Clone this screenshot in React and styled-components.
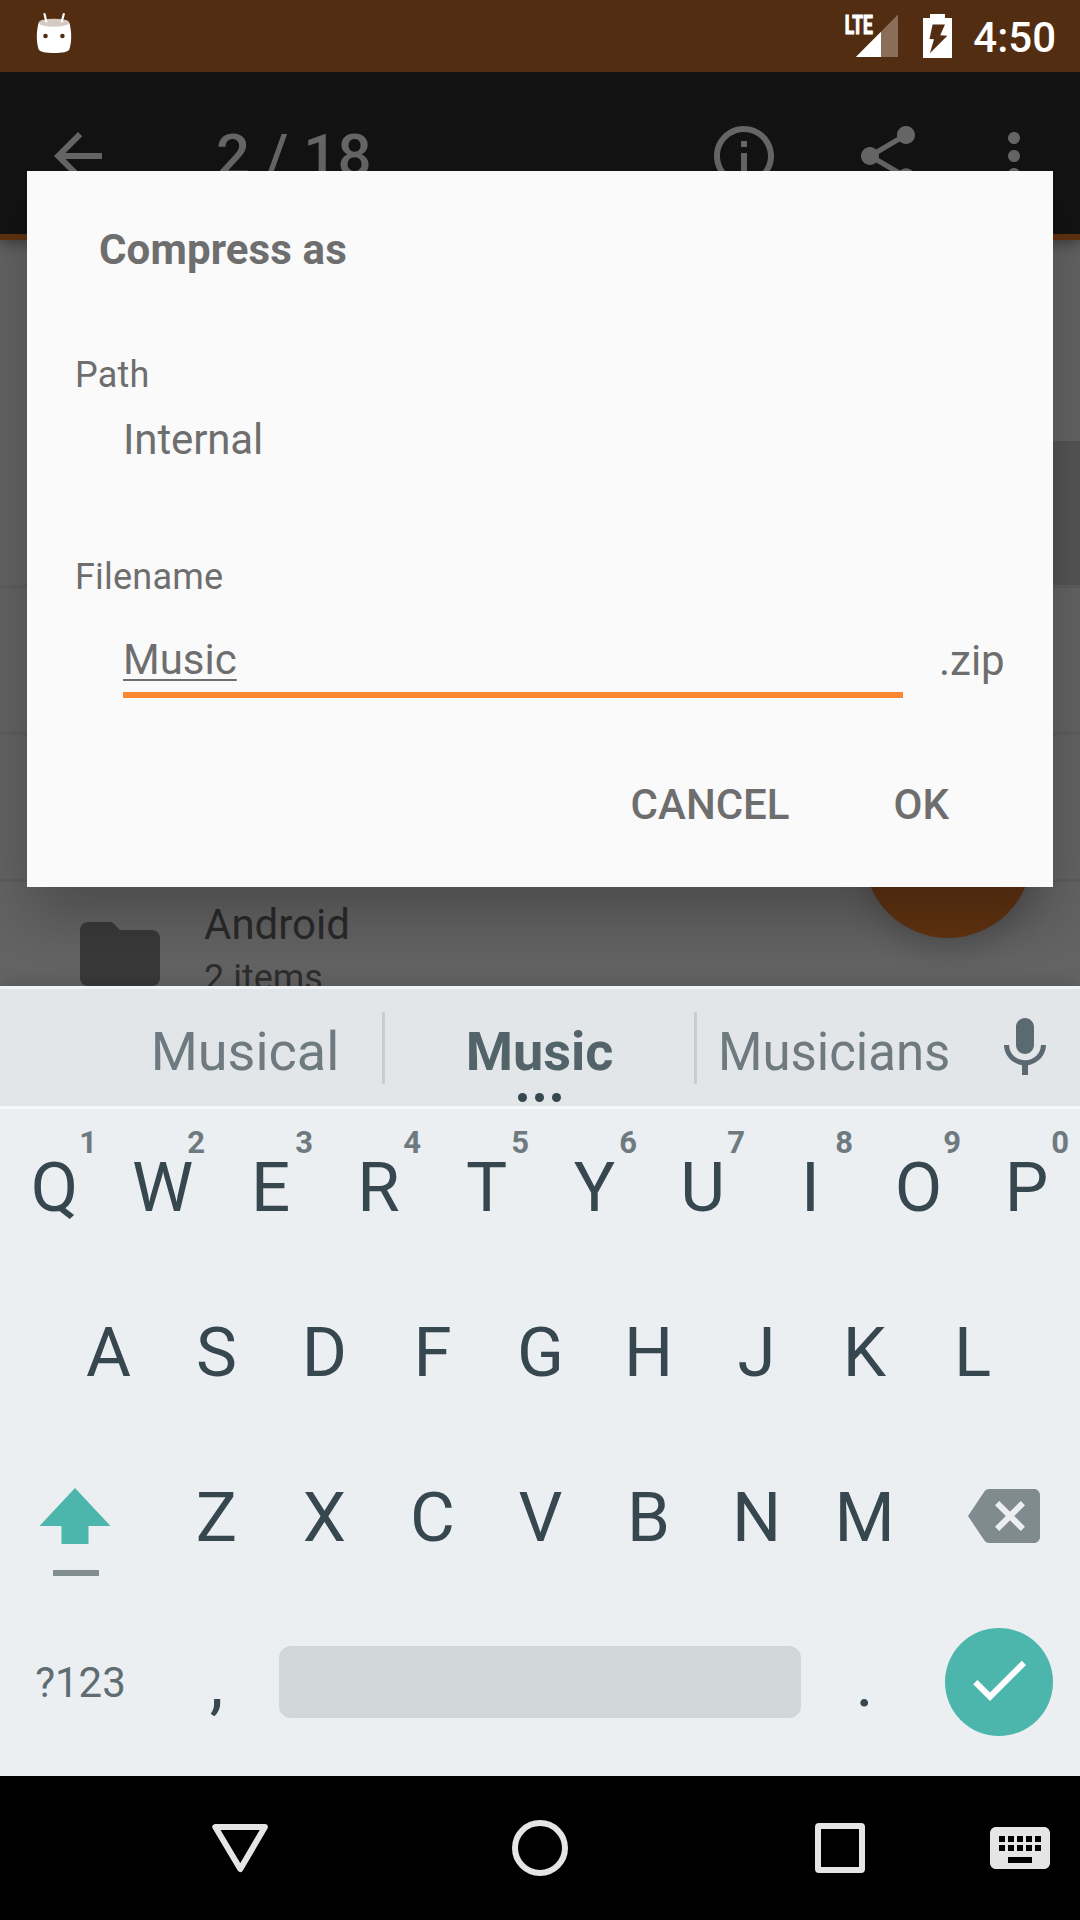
import React from "react";
import styled, { createGlobalStyle } from "styled-components";

const Global = createGlobalStyle`
  * { box-sizing: border-box; }
  html, body { margin: 0; padding: 0; background: #000; }
  body { font-family: Roboto, "Noto Sans", sans-serif; }
  svg { display: block; flex: none; }
`;

const Screen = styled.div`
  width: 1080px;
  height: 1920px;
  display: flex;
  flex-direction: column;
  overflow: hidden;
  background: #000;
`;

/* ---- status bar ---- */
const StatusBar = styled.header`
  height: 72px;
  flex: none;
  display: flex;
  justify-content: space-between;
  padding: 0 24px 0 36px;
  background: #532d12;
`;
const StatusIcons = styled.div`
  display: flex;
  align-items: center;
  gap: 22px;
`;
const Clock = styled.span`
  margin-left: -2px;
  padding-top: 3px;
  font-size: 42px;
  font-weight: 500;
  line-height: 72px;
  color: #fff;
`;

/* ---- app window behind the dialog ---- */
const Window = styled.main`
  position: relative;
  height: 914px;
  flex: none;
  display: flex;
  flex-direction: column;
  overflow: hidden;
  background: #646464;
`;
const Toolbar = styled.div`
  height: 168px;
  flex: none;
  display: flex;
  align-items: flex-start;
  padding: 48px 30px 0 42px;
  background: #131313;
  color: #666;
  border-bottom: 6px solid #613311;
  box-shadow: 0 4px 12px rgba(0, 0, 0, 0.35);
  z-index: 1;
`;
const Count = styled.span`
  flex: 1;
  margin-left: 102px;
  font-size: 60px;
  font-weight: 500;
  line-height: 72px;
`;
const Actions = styled.div`
  display: flex;
  gap: 72px;
  margin-left: ${(p) => p.$offset || 0}px;
`;
const FileList = styled.div`
  flex: none;
  padding-top: 54px;
`;
const FileRow = styled.div`
  height: 147px;
  display: flex;
  align-items: flex-start;
  padding: 24px 0 0 72px;
  color: #3a3a3a;
  border-bottom: 3px solid ${(p) => (p.$plain ? "transparent" : "#5e5e5e")};
  background: ${(p) =>
    p.$selected
      ? "linear-gradient(90deg, transparent 50%, #555 50%) padding-box"
      : "none"};
`;
const FileText = styled.div`
  margin-left: 36px;
`;
const FileName = styled.div`
  font-size: 42px;
  line-height: 48px;
  margin-top: -5px;
  color: #2a2a2a;
`;
const FileMeta = styled.div`
  font-size: 36px;
  line-height: 42px;
  margin-top: 8px;
  color: #2e2e2e;
`;
const Fab = styled.div`
  position: absolute;
  right: 48px;
  bottom: 48px;
  width: 168px;
  height: 168px;
  border-radius: 50%;
  background: #613311;
  box-shadow: 0 12px 28px rgba(0, 0, 0, 0.18);
`;

/* ---- dialog ---- */
const DialogLayer = styled.div`
  position: absolute;
  inset: 0;
  display: flex;
  align-items: center;
  justify-content: center;
  z-index: 2;
`;
const Dialog = styled.section`
  width: 1026px;
  height: 716px;
  padding-top: 55px;
  background: #fafafa;
  color: #6e6e6e;
  box-shadow: 0 30px 60px rgba(0, 0, 0, 0.25);
`;
const Title = styled.h1`
  margin: 0 0 80px 72px;
  font-size: 42px;
  line-height: 48px;
  font-weight: 700;
  letter-spacing: 0.12px;
`;
const Label = styled.div`
  margin-left: 48px;
  font-size: 36px;
  line-height: 42px;
  letter-spacing: 0.2px;
`;
const PathValue = styled.div`
  margin: 20px 0 92px 96px;
  font-size: 42px;
  line-height: 48px;
  letter-spacing: -0.12px;
`;
const FieldRow = styled.div`
  display: flex;
  align-items: flex-start;
  margin: 38px 0 0 96px;
  font-size: 42px;
  line-height: 48px;
`;
const Field = styled.div`
  width: 780px;
  height: 62px;
  margin-bottom: 1px;
  border-bottom: 6px solid #f98831;
`;
const Composing = styled.span`
  text-decoration: underline;
  text-decoration-thickness: 2px;
  text-underline-offset: 5px;
  text-decoration-skip-ink: none;
`;
const Extension = styled.span`
  margin-left: 36px;
  padding-top: 1px;
`;
const Buttons = styled.div`
  display: flex;
  justify-content: flex-end;
  gap: 104px;
  margin-top: 82px;
  padding-right: 104px;
`;
const Button = styled.span`
  font-size: 42px;
  line-height: 48px;
  font-weight: 500;
`;

/* ---- keyboard ---- */
const Keyboard = styled.section`
  position: relative;
  height: 790px;
  flex: none;
  background: #ebeff2;
  color: #37474f;
  box-shadow: 0 0 18px rgba(0, 0, 0, 0.2);
  z-index: 3;
`;
const Strip = styled.div`
  height: 123px;
  display: flex;
  align-items: center;
  padding-left: 108px;
  background: #e2e6e9;
  border-top: 3px solid #f1f3f4;
  border-bottom: 3px solid #f5f7f8;
`;
const Suggestion = styled.div`
  position: relative;
  width: ${(p) => p.$w}px;
  height: 117px;
  display: flex;
  justify-content: center;
  font-size: 54px;
  line-height: 117px;
  font-weight: ${(p) => (p.$main ? 700 : 400)};
  color: ${(p) => (p.$main ? "#52636a" : "#6e7a80")};
`;
const Word = styled.span`
  margin: 4px ${(p) => (p.$squeeze ? 2 : 0)}px 0 0;
  white-space: nowrap;
  transform: scaleX(${(p) => p.$squeeze || 1});
`;
const StripDivider = styled.i`
  width: 3px;
  height: 72px;
  background: #c9cdd0;
`;
const MoreDots = styled.span`
  position: absolute;
  bottom: 4px;
  left: 50%;
  margin-left: -22px;
  display: flex;
  gap: 8px;
`;
const Dot = styled.i`
  width: 9px;
  height: 9px;
  border-radius: 50%;
  background: #37474f;
`;
const Mic = styled.div`
  margin-left: 16px;
  color: #5b6a71;
`;
const KeyRow = styled.div`
  height: ${(p) => p.$h || 165}px;
  display: flex;
  align-items: flex-end;
  justify-content: center;
`;
const Key = styled.div`
  position: relative;
  width: ${(p) => p.$w || 108}px;
  height: 165px;
  display: flex;
  align-items: center;
  justify-content: center;
  font-size: 69px;
  line-height: 1;
  padding: 1px 0 0 1px;
`;
const SymbolKey = styled(Key)`
  padding: 3px 1px 0 0;
  font-size: 42px;
  color: #5f6d73;
`;
const Hint = styled.sup`
  position: absolute;
  top: 21px;
  right: 11px;
  font-size: 31px;
  line-height: 36px;
  font-weight: 700;
  color: #6e7a80;
`;
const ShiftKey = styled(Key)`
  flex-direction: column;
  justify-content: flex-start;
  gap: 26px;
  padding: 54px 12px 0 0;
`;
const ShiftMark = styled.i`
  width: 46px;
  height: 6px;
  margin-left: 2px;
  background: #828d92;
`;
const BackspaceKey = styled(Key)`
  padding: 0 0 1px 10px;
  color: #808b90;
`;
const IconKey = styled(Key)`
  padding: 1px 0 0;
`;
const SpaceBar = styled.div`
  width: 522px;
  height: 72px;
  border-radius: 12px;
  background: #d1d6d9;
`;
const Enter = styled.div`
  width: 108px;
  height: 108px;
  border-radius: 50%;
  background: #4db6ac;
  color: #fff;
  display: flex;
  align-items: center;
  justify-content: center;
  padding: 0 1px 4px 0;
`;

/* ---- navigation bar ---- */
const NavBar = styled.nav`
  height: 144px;
  flex: none;
  display: flex;
  padding: 0 30px 0 90px;
  background: #000;
  color: #e5e5e5;
`;
const NavButton = styled.div`
  width: ${(p) => p.$w || 300}px;
  display: flex;
  align-items: center;
  justify-content: center;
`;

const Icon = ({ d, size = 72 }) => (
  <svg width={size} height={size} viewBox="0 0 24 24" fill="currentColor">
    <path d={d} />
  </svg>
);

const icons = {
  back: "M20 11H7.83l5.59-5.59L12 4l-8 8 8 8 1.41-1.41L7.83 13H20v-2z",
  info: "M11 17h2v-6h-2v6zm1-15C6.48 2 2 6.48 2 12s4.48 10 10 10 10-4.48 10-10S17.52 2 12 2zm0 18c-4.41 0-8-3.59-8-8s3.59-8 8-8 8 3.59 8 8-3.59 8-8 8zM11 9h2V7h-2v2z",
  share:
    "M18 16.08c-.76 0-1.44.3-1.96.77L8.91 12.7c.05-.23.09-.46.09-.7s-.04-.47-.09-.7l7.05-4.11c.54.5 1.25.81 2.04.81 1.66 0 3-1.34 3-3s-1.34-3-3-3-3 1.34-3 3c0 .24.04.47.09.7L8.04 9.81C7.5 9.31 6.79 9 6 9c-1.66 0-3 1.34-3 3s1.34 3 3 3c.79 0 1.5-.31 2.04-.81l7.12 4.16c-.05.21-.08.43-.08.65 0 1.61 1.31 2.92 2.92 2.92s2.92-1.31 2.92-2.92-1.31-2.92-2.92-2.92z",
  more: "M12 8c1.1 0 2-.9 2-2s-.9-2-2-2-2 .9-2 2 .9 2 2 2zm0 2c-1.1 0-2 .9-2 2s.9 2 2 2 2-.9 2-2-.9-2-2-2zm0 6c-1.1 0-2 .9-2 2s.9 2 2 2 2-.9 2-2-.9-2-2-2z",
  folder:
    "M10 4H4c-1.1 0-1.99.9-1.99 2L2 18c0 1.1.9 2 2 2h16c1.1 0 2-.9 2-2V8c0-1.1-.9-2-2-2h-8l-2-2z",
  mic: "M12 14c1.66 0 2.99-1.34 2.99-3L15 5c0-1.66-1.34-3-3-3S9 3.34 9 5v6c0 1.66 1.34 3 3 3zm5.3-3c0 3-2.54 5.1-5.3 5.1S6.7 14 6.7 11H5c0 3.41 2.72 6.23 6 6.72V21h2v-3.28c3.28-.48 6-3.3 6-6.72h-1.7z",
  backspace:
    "M22 3H7c-.69 0-1.23.35-1.59.88L0 12l5.41 8.11c.36.53.9.89 1.59.89h15c1.1 0 2-.9 2-2V5c0-1.1-.9-2-2-2zm-3 12.59L17.59 17 14 13.41 10.41 17 9 15.59 12.59 12 9 8.41 10.41 7 14 10.59 17.59 7 19 8.41 15.41 12 19 15.59z",
  check: "M9 16.17L4.83 12l-1.42 1.41L9 19 21 7l-1.41-1.41z",
};

const AndroidHead = () => (
  <svg width="36" height="72" viewBox="36 0 36 72">
    <path
      d="M38.5 23 C36 33 36.5 42 38.5 49 C39.5 52 46 53 54 53 C62 53 68.5 52 69.5 49 C71.5 42 72 33 69.5 23 Z"
      fill="#fff"
    />
    <ellipse cx="54" cy="22.7" rx="15.3" ry="4" fill="#d5cac3" />
    <path d="M44.5 14 L46.3 21.5 M63.8 14 L61.8 21.5" stroke="#fff" strokeWidth="2.2" strokeLinecap="round" />
    <circle cx="45.5" cy="36" r="2.3" fill="#532d12" />
    <circle cx="62.4" cy="36" r="2.3" fill="#532d12" />
  </svg>
);

const Signal = () => (
  <svg width="54" height="72" viewBox="845 0 54 72">
    <text
      x="844.8"
      y="33.6"
      fill="#fff"
      stroke="#fff"
      strokeWidth="1.2"
      fontFamily="Roboto, sans-serif"
      fontSize="25.5"
      fontWeight="700"
      textLength="28"
      lengthAdjust="spacingAndGlyphs"
    >
      LTE
    </text>
    <path d="M898 14.5 V57 H881 V31.8 Z" fill="#8a6e5a" />
    <path d="M881 31.8 V57 H855.8 Z" fill="#fff" />
  </svg>
);

const Battery = () => (
  <svg width="32" height="72" viewBox="921 0 32 72">
    <path d="M930 14 H945 V18 H952 V58 H923 V18 H930 Z" fill="#fff" />
    <path d="M932.6 24.5 H945 L940.2 35.3 L947.4 35.7 L929.9 53.3 L934 39.3 L929.5 39 Z" fill="#532d12" />
  </svg>
);

const ROW1 = ["Q", "W", "E", "R", "T", "Y", "U", "I", "O", "P"];
const ROW2 = ["A", "S", "D", "F", "G", "H", "J", "K", "L"];
const ROW3 = ["Z", "X", "C", "V", "B", "N", "M"];

export default function App() {
  return (
    <Screen>
      <Global />
      <StatusBar>
        <AndroidHead />
        <StatusIcons>
          <Signal />
          <Battery />
          <Clock>4:50</Clock>
        </StatusIcons>
      </StatusBar>

      <Window>
        <Toolbar>
          <Icon d={icons.back} />
          <Count>2 / 18</Count>
          <Actions>
            <Icon d={icons.info} />
            <Icon d={icons.share} />
          </Actions>
          <Actions $offset={54}>
            <Icon d={icons.more} />
          </Actions>
        </Toolbar>
        <FileList>
          <FileRow $plain />
          <FileRow $selected />
          <FileRow />
          <FileRow />
          <FileRow>
            <Icon d={icons.folder} size={96} />
            <FileText>
              <FileName>Android</FileName>
              <FileMeta>2 items</FileMeta>
            </FileText>
          </FileRow>
        </FileList>
        <Fab />
        <DialogLayer>
          <Dialog>
            <Title>Compress as</Title>
            <Label>Path</Label>
            <PathValue>Internal</PathValue>
            <Label>Filename</Label>
            <FieldRow>
              <Field>
                <Composing>Music</Composing>
              </Field>
              <Extension>.zip</Extension>
            </FieldRow>
            <Buttons>
              <Button>CANCEL</Button>
              <Button>OK</Button>
            </Buttons>
          </Dialog>
        </DialogLayer>
      </Window>

      <Keyboard>
        <Strip>
          <Suggestion $w={274}>
            <Word>Musical</Word>
          </Suggestion>
          <StripDivider />
          <Suggestion $w={309} $main>
            <Word>Music</Word>
            <MoreDots>
              <Dot />
              <Dot />
              <Dot />
            </MoreDots>
          </Suggestion>
          <StripDivider />
          <Suggestion $w={276}>
            <Word $squeeze={0.943}>Musicians</Word>
          </Suggestion>
          <Mic>
            <Icon d={icons.mic} />
          </Mic>
        </Strip>
        <KeyRow $h={160}>
          {ROW1.map((k, i) => (
            <Key key={k}>
              {k}
              <Hint>{(i + 1) % 10}</Hint>
            </Key>
          ))}
        </KeyRow>
        <KeyRow>
          {ROW2.map((k) => (
            <Key key={k}>{k}</Key>
          ))}
        </KeyRow>
        <KeyRow>
          <ShiftKey $w={162}>
            <svg width="72" height="56" viewBox="0 0 72 56" fill="#4db6ac">
              <path d="M36 0 L71.5 38 H49.5 V56 H22.5 V38 H0.5 Z" />
            </svg>
            <ShiftMark />
          </ShiftKey>
          {ROW3.map((k) => (
            <Key key={k}>{k}</Key>
          ))}
          <BackspaceKey $w={162}>
            <Icon d={icons.backspace} />
          </BackspaceKey>
        </KeyRow>
        <KeyRow>
          <SymbolKey $w={162}>?123</SymbolKey>
          <Key>,</Key>
          <IconKey $w={540}>
            <SpaceBar />
          </IconKey>
          <Key>.</Key>
          <IconKey $w={162}>
            <Enter>
              <Icon d={icons.check} />
            </Enter>
          </IconKey>
        </KeyRow>
      </Keyboard>

      <NavBar>
        <NavButton>
          <svg width="60" height="60" viewBox="210 1818 60 60" fill="none" stroke="currentColor" strokeWidth="6" strokeLinejoin="round">
            <path d="M215.3 1827 H264.9 L240.3 1869 Z" />
          </svg>
        </NavButton>
        <NavButton>
          <svg width="60" height="60" viewBox="0 0 60 60" fill="none" stroke="currentColor" strokeWidth="6">
            <circle cx="30" cy="30" r="25" />
          </svg>
        </NavButton>
        <NavButton>
          <svg width="50" height="50" viewBox="0 0 50 50" fill="currentColor" fillRule="evenodd">
            <path d="M4 0H46Q50 0 50 4V46Q50 50 46 50H4Q0 50 0 46V4Q0 0 4 0ZM6 6V44H44V6Z" />
          </svg>
        </NavButton>
        <NavButton $w={60}>
          <svg width="60" height="42" viewBox="2 5 20 14" fill="currentColor">
            <path d="M20 5H4c-1.1 0-1.99.9-1.99 2L2 17c0 1.1.9 2 2 2h16c1.1 0 2-.9 2-2V7c0-1.1-.9-2-2-2zm-9 3h2v2h-2V8zm0 3h2v2h-2v-2zM8 8h2v2H8V8zm0 3h2v2H8v-2zm-1 2H5v-2h2v2zm0-3H5V8h2v2zm9 7H8v-2h8v2zm0-4h-2v-2h2v2zm0-3h-2V8h2v2zm3 3h-2v-2h2v2zm0-3h-2V8h2v2z" />
          </svg>
        </NavButton>
      </NavBar>
    </Screen>
  );
}
